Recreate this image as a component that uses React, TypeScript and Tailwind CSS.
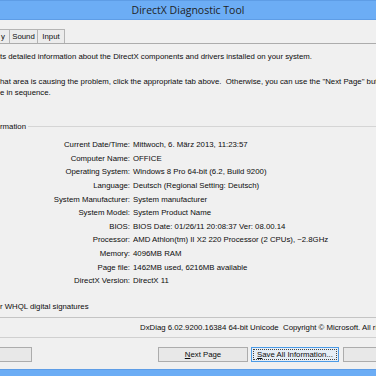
import React from 'react';

const rows: [string, string][] = [
    ['Current Date/Time:', 'Mittwoch, 6. März 2013, 11:23:57'],
    ['Computer Name:', 'OFFICE'],
    ['Operating System:', 'Windows 8 Pro 64-bit (6.2, Build 9200)'],
    ['Language:', 'Deutsch (Regional Setting: Deutsch)'],
    ['System Manufacturer:', 'System manufacturer'],
    ['System Model:', 'System Product Name'],
    ['BIOS:', 'BIOS Date: 01/26/11 20:08:37 Ver: 08.00.14'],
    ['Processor:', 'AMD Athlon(tm) II X2 220 Processor (2 CPUs), ~2.8GHz'],
    ['Memory:', '4096MB RAM'],
    ['Page file:', '1462MB used, 6216MB available'],
    ['DirectX Version:', 'DirectX 11'],
];

const App: React.FC = () => {
    return (
        <div className="w-[376px] h-[376px] overflow-hidden bg-[#f0f0f0] flex flex-col text-[#0c0c0c] font-['Liberation_Sans',Arial,sans-serif] text-[7.8px] leading-[11px]">
            {/* Title bar */}
            <div className="h-[20px] shrink-0 bg-[#6cadf5] border-t border-[#5e9de6] border-b flex items-center justify-center">
                <span className="font-['Open_Sans',sans-serif] text-[10.5px] text-[#1f1f1f]">DirectX Diagnostic Tool</span>
            </div>

            {/* Tabs */}
            <div className="h-[24px] shrink-0 flex items-end border-b border-[#acacac]">
                <div className="h-[14px] w-[10px] border-t border-r border-[#b4b4b4] bg-[#ececec] flex items-center pl-[1px]">y</div>
                <div className="h-[14px] w-[28px] border-t border-r border-[#b4b4b4] bg-[#ececec] flex items-center justify-center">Sound</div>
                <div className="h-[14px] w-[27px] border-t border-r border-[#b4b4b4] bg-[#ececec] flex items-center justify-center">Input</div>
            </div>

            {/* Tab page */}
            <div className="h-[274px] shrink-0 border-b border-[#c4c4c4] flex flex-col whitespace-nowrap">
                <p className="mt-[7px]">ts detailed information about the DirectX components and drivers installed on your system.</p>
                <p className="mt-[14px]">hat area is causing the problem, click the appropriate tab above.&nbsp; Otherwise, you can use the "Next Page" button below to visit each</p>
                <p>e in sequence.</p>

                {/* Group box */}
                <div className="mt-[23px] flex items-center">
                    <span>rmation</span>
                    <div className="flex-1 ml-[2px] border-t border-[#d5d5d5]"></div>
                </div>
                <div className="mt-[6px] grid grid-cols-[130px_1fr] gap-x-[3px]">
                    {rows.map(([label, value]) => (
                        <React.Fragment key={label}>
                            <div className="h-[13.6px] flex items-center justify-end">{label}</div>
                            <div className="h-[13.6px] flex items-center">{value}</div>
                        </React.Fragment>
                    ))}
                </div>
                <p className="mt-[13px]">r WHQL digital signatures</p>
            </div>

            {/* Status line */}
            <div className="h-[20px] shrink-0 pl-[140px] pt-[4px] whitespace-nowrap border-b border-[#d0d0d0]">
                DxDiag 6.02.9200.16384 64-bit Unicode&nbsp; Copyright © Microsoft. All rights reserved.
            </div>

            {/* Buttons */}
            <div className="mt-[9px] h-[15px] shrink-0 flex whitespace-nowrap">
                <div className="w-[32px] shrink-0 border-t border-r border-b border-[#acacac] bg-[#e8e8e8]"></div>
                <div className="ml-[126px] w-[90px] shrink-0 border border-[#acacac] bg-[#e8e8e8] flex items-center justify-center">
                    <span><span className="underline">N</span>ext Page</span>
                </div>
                <div className="ml-[3px] w-[88px] shrink-0 border border-[#4c9be6] bg-[#e6eef6] flex items-center justify-center">
                    <span className="border border-dotted border-[#444] px-[3px] leading-[9px]"><span className="underline">S</span>ave All Information...</span>
                </div>
                <div className="ml-[4px] w-[60px] shrink-0 border border-[#acacac] bg-[#e8e8e8]"></div>
            </div>

            {/* Window bottom frame */}
            <div className="mt-auto h-[7px] shrink-0 bg-[#6cadf5] border-t border-[#5e9de6]"></div>
        </div>
    );
};

export default App;
